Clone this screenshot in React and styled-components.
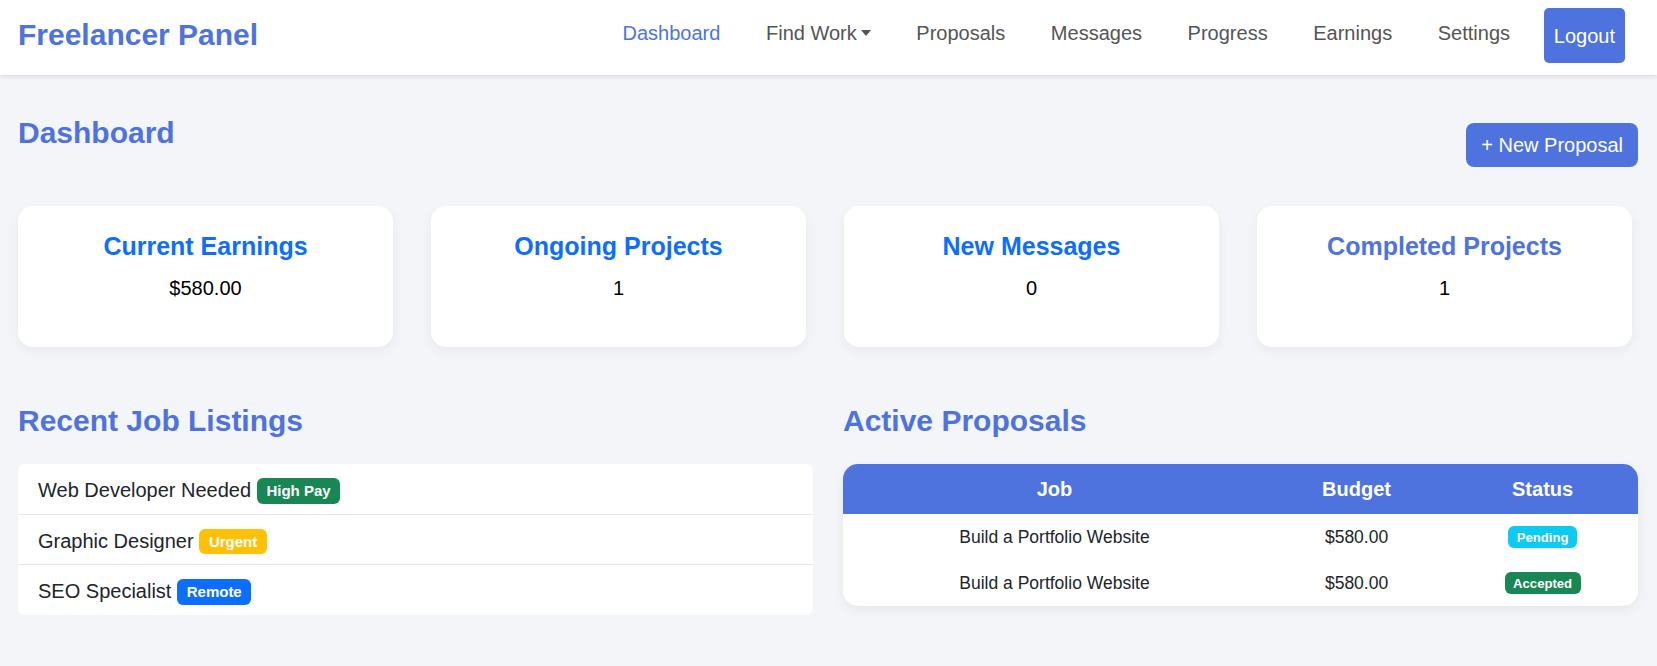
import styled, { createGlobalStyle } from 'styled-components';

const GlobalStyle = createGlobalStyle`
  * { box-sizing: border-box; }
  body {
    margin: 0;
    background-color: #f4f5f9;
    font-family: "Liberation Sans", Arial, sans-serif;
    color: #212529;
  }
`;

const jobs = [
    { title: 'Web Developer Needed', tag: 'High Pay', color: '#198754' },
    { title: 'Graphic Designer', tag: 'Urgent', color: '#ffc107' },
    { title: 'SEO Specialist', tag: 'Remote', color: '#0d6efd' },
];

const proposals = [
    { job: 'Build a Portfolio Website', budget: '$580.00', status: 'Pending', color: '#0dcaf0' },
    { job: 'Build a Portfolio Website', budget: '$580.00', status: 'Accepted', color: '#198754' },
];

const stats = [
    { label: 'Current Earnings', value: '$580.00', color: '#0d6efd' },
    { label: 'Ongoing Projects', value: '1', color: '#0d6efd' },
    { label: 'New Messages', value: '0', color: '#0d6efd' },
    { label: 'Completed Projects', value: '1', color: '#4e73df' },
];

const links = ['Dashboard', 'Find Work', 'Proposals', 'Messages', 'Progress', 'Earnings', 'Settings'];

const App = () => {
    return (
        <>
            <GlobalStyle />
            <Navbar>
                <Brand>Freelancer Panel</Brand>
                <NavLinks>
                    {links.map((l, i) => (
                        <NavLink key={l} $active={i === 0} $dropdown={l === 'Find Work'}>{l}</NavLink>
                    ))}
                    <LogoutButton>Logout</LogoutButton>
                </NavLinks>
            </Navbar>

            <Main>
                <Header>
                    <PageTitle>Dashboard</PageTitle>
                    <PrimaryButton>+ New Proposal</PrimaryButton>
                </Header>

                <Cards>
                    {stats.map((s) => (
                        <Card key={s.label}>
                            <CardTitle $color={s.color}>{s.label}</CardTitle>
                            <CardValue>{s.value}</CardValue>
                        </Card>
                    ))}
                </Cards>

                <Columns>
                    <section>
                        <SectionTitle>Recent Job Listings</SectionTitle>
                        <JobList>
                            {jobs.map((j) => (
                                <JobItem key={j.title}>
                                    {j.title} <Badge $bg={j.color}>{j.tag}</Badge>
                                </JobItem>
                            ))}
                        </JobList>
                    </section>

                    <section>
                        <SectionTitle>Active Proposals</SectionTitle>
                        <Table>
                            <thead>
                                <tr>
                                    <Th style={{ width: '53.2%' }}>Job</Th>
                                    <Th style={{ width: '22.8%' }}>Budget</Th>
                                    <Th>Status</Th>
                                </tr>
                            </thead>
                            <tbody>
                                {proposals.map((p, i) => (
                                    <tr key={i}>
                                        <Td>{p.job}</Td>
                                        <Td>{p.budget}</Td>
                                        <Td><Badge $bg={p.color}>{p.status}</Badge></Td>
                                    </tr>
                                ))}
                            </tbody>
                        </Table>
                    </section>
                </Columns>
            </Main>
        </>
    );
};

export default App;

const Navbar = styled.nav`
    display: flex;
    justify-content: space-between;
    align-items: center;
    height: 75px;
    padding: 0 32px 4px 18px;
    background-color: white;
    box-shadow: 0 2px 4px rgba(0, 0, 0, 0.1);
    position: relative;
`;

const Brand = styled.div`
    color: #4e73df;
    font-size: 30px;
    font-weight: bold;
    padding-bottom: 2px;
`;

const NavLinks = styled.div`
    display: flex;
    align-items: center;
`;

const NavLink = styled.a`
    font-size: 20px;
    color: ${(p) => (p.$active ? '#4e73df' : '#555')};
    padding: 0 22.8px 5px;
    cursor: pointer;

    ${(p) => p.$dropdown && `
        &::after {
            content: '';
            display: inline-block;
            margin-left: 4px;
            vertical-align: 4px;
            border-top: 6px solid currentColor;
            border-left: 5px solid transparent;
            border-right: 5px solid transparent;
        }
    `}
`;

const LogoutButton = styled.button`
    margin-left: 11px;
    font-family: inherit;
    font-size: 20px;
    color: white;
    background-color: #4e73df;
    border: none;
    border-radius: 5px;
    height: 55px;
    padding: 2px 10px 0;
`;

const Main = styled.main`
    padding: 41px 19px 40px 18px;
`;

const Header = styled.div`
    display: flex;
    justify-content: space-between;
    align-items: flex-start;
`;

const PageTitle = styled.h1`
    margin: 0;
    color: #4e73df;
    font-size: 30px;
`;

const PrimaryButton = styled.button`
    margin-top: 7px;
    font-family: inherit;
    font-size: 20px;
    color: white;
    background-color: #4e73df;
    border: none;
    border-radius: 8px;
    height: 44px;
    padding: 0 15px;
`;

const Cards = styled.div`
    display: grid;
    grid-template-columns: repeat(4, 1fr);
    column-gap: 38px;
    margin-top: 39px;
    padding-right: 6px;
`;

const Card = styled.div`
    background-color: white;
    border-radius: 15px;
    padding: 26px 20px 47px;
    text-align: center;
    box-shadow: 0 4px 12px rgba(0, 0, 0, 0.05);
`;

const CardTitle = styled.h3`
    margin: 0;
    font-size: 25px;
    color: ${(p) => p.$color};
`;

const CardValue = styled.p`
    margin: 16px 0 0;
    font-size: 20px;
    color: #000;
`;

const Columns = styled.div`
    display: grid;
    grid-template-columns: 1fr 1fr;
    column-gap: 30px;
    margin-top: 57px;
`;

const SectionTitle = styled.h2`
    margin: 0 0 26px;
    color: #4e73df;
    font-size: 30px;
`;

const JobList = styled.ul`
    list-style: none;
    margin: 0;
    padding: 0;
    background-color: white;
    border-radius: 7px;
    overflow: hidden;
`;

const JobItem = styled.li`
    font-size: 20px;
    line-height: 25px;
    padding: 14px 20px 10px;
    border-bottom: 1px solid #e6e8ec;

    &:last-child {
        border-bottom: none;
    }
`;

const Badge = styled.span`
    display: inline-block;
    font-size: 0.75em;
    font-weight: bold;
    line-height: 1;
    color: white;
    background-color: ${(p) => p.$bg};
    padding: 0.35em 0.65em;
    border-radius: 6px;
    vertical-align: 1px;
`;

const Table = styled.table`
    width: 100%;
    border-collapse: collapse;
    background-color: white;
    border-radius: 15px;
    overflow: hidden;
    box-shadow: 0 4px 12px rgba(0, 0, 0, 0.06);
    font-size: 17.5px;
`;

const Th = styled.th`
    background-color: #4e73df;
    color: white;
    font-size: 20px;
    padding: 13.5px 10px;
    text-align: center;
`;

const Td = styled.td`
    text-align: center;
    padding: 11.5px 10px;
    line-height: 23px;
`;
